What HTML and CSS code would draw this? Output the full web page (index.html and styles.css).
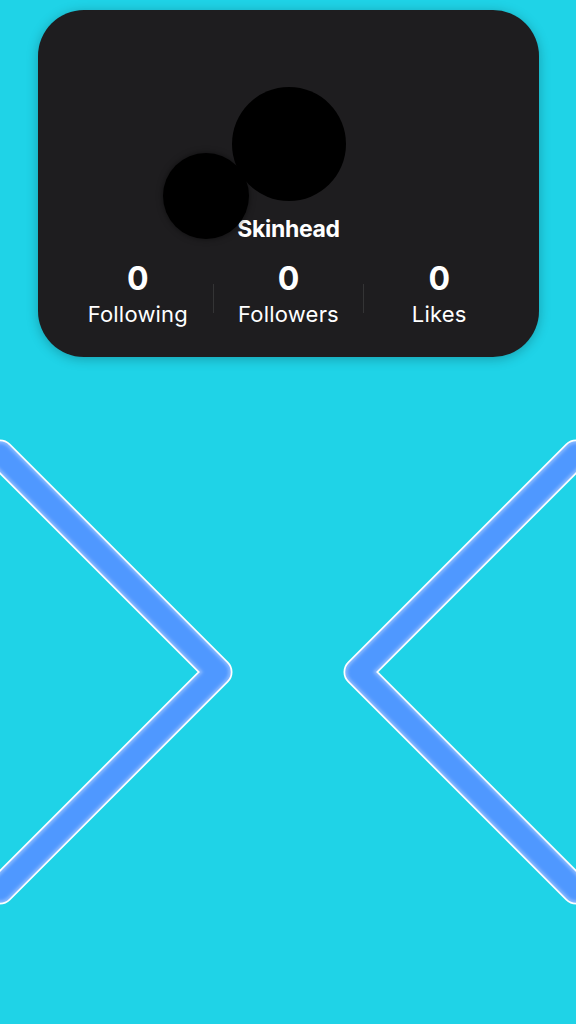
FILE: index.html
```html
<!DOCTYPE html>
<html lang="en">
<head>
<meta charset="utf-8">
<title>Profile</title>
<link rel="stylesheet" href="styles.css">
</head>
<body>
<div class="card">
  <div class="avatars">
    <div class="avatar avatar-main"></div>
    <div class="avatar avatar-small"></div>
  </div>
  <div class="name">Skinhead</div>
  <div class="stats">
    <div class="stat"><div class="num">0</div><div class="label">Following</div></div>
    <div class="divider"></div>
    <div class="stat"><div class="num">0</div><div class="label">Followers</div></div>
    <div class="divider"></div>
    <div class="stat"><div class="num">0</div><div class="label">Likes</div></div>
  </div>
</div>
<svg class="chevrons" width="576" height="520" viewBox="0 0 576 520" xmlns="http://www.w3.org/2000/svg">
  <defs>
    <filter id="soft" x="-10%" y="-10%" width="120%" height="120%">
      <feGaussianBlur stdDeviation="1.5"/>
    </filter>
  </defs>
  <g fill="none" stroke-linejoin="round" stroke-linecap="round">
    <path d="M0 39 L218 257 L0 475" stroke="#ffffff" stroke-width="29"/>
    <path d="M0 39 L218 257 L0 475" stroke="#86b8ff" stroke-width="25.5"/>
    <path d="M0 39 L218 257 L0 475" stroke="#4f98ff" stroke-width="21" filter="url(#soft)"/>
    <path d="M576 39 L358 257 L576 475" stroke="#ffffff" stroke-width="29"/>
    <path d="M576 39 L358 257 L576 475" stroke="#86b8ff" stroke-width="25.5"/>
    <path d="M576 39 L358 257 L576 475" stroke="#4f98ff" stroke-width="21" filter="url(#soft)"/>
  </g>
</svg>
</body>
</html>
```
FILE: styles.css
```css
html, body {
  margin: 0;
  padding: 0;
}
body {
  background: #1fd3e7;
  font-family: Inter, "Noto Sans", sans-serif;
  color: #fff;
  width: 576px;
  height: 1024px;
  overflow: hidden;
}
.card {
  box-sizing: border-box;
  margin: 10px 0 0 38px;
  width: 501px;
  height: 347px;
  border-radius: 46px;
  background: #1e1d1f;
  box-shadow: 0 2px 12px rgba(0, 0, 0, 0.25);
  padding: 77px 25px 0;
  display: flex;
  flex-direction: column;
  align-items: center;
}
.avatars {
  position: relative;
  width: 114px;
  height: 114px;
}
.avatar {
  border-radius: 50%;
  background: #000;
}
.avatar-main {
  width: 114px;
  height: 114px;
}
.avatar-small {
  position: absolute;
  left: -69px;
  top: 66px;
  width: 86px;
  height: 86px;
  z-index: 2;
  box-shadow: 0 0 6px rgba(0, 0, 0, 0.5);
}
.name {
  margin-top: 14px;
  font-size: 23px;
  line-height: 28px;
  font-weight: 700;
  letter-spacing: -0.3px;
}
.stats {
  margin-top: 18px;
  width: 100%;
  display: grid;
  grid-template-columns: 1fr 1px 1fr 1px 1fr;
}
.stat {
  display: flex;
  flex-direction: column;
  align-items: center;
}
.num {
  font-size: 32px;
  line-height: 36px;
  font-weight: 700;
}
.label {
  margin-top: 4px;
  font-size: 22px;
  line-height: 26px;
  font-weight: 400;
  letter-spacing: 0.2px;
}
.divider {
  align-self: end;
  height: 29px;
  margin-bottom: 14px;
  background: rgba(255, 255, 255, 0.1);
}
.chevrons {
  display: block;
  margin-top: 58px;
}
```
